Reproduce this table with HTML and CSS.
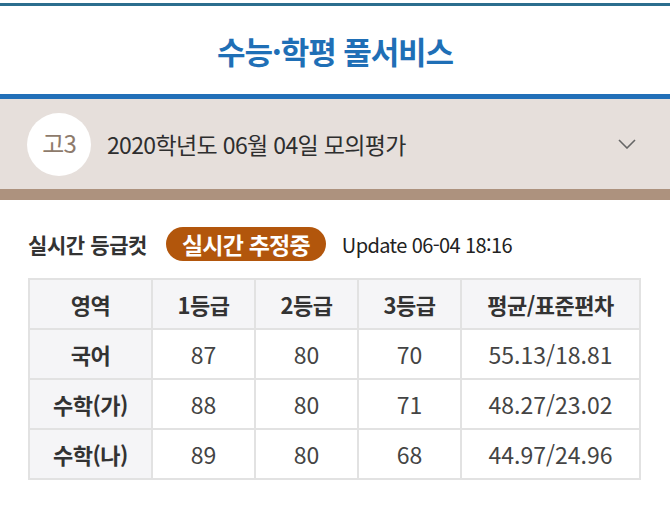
FILE: index.html
```html
<!DOCTYPE html>
<html lang="ko">
<head>
<meta charset="utf-8">
<link rel="stylesheet" href="styles.css">
</head>
<body>
<div class="page">
  <header class="top">
    <h1 class="title">수능·학평 풀서비스</h1>
  </header>
  <section class="exam">
    <div class="grade">고3</div>
    <div class="exam-name">2020학년도 06월 04일 모의평가</div>
    <svg class="chev" width="18" height="10" viewBox="0 0 18 10"><path d="M1 1 L9 9 L17 1" fill="none" stroke="#666" stroke-width="1.6"/></svg>
  </section>
  <section class="cut">
    <div class="cut-head">
      <span class="cut-title">실시간 등급컷</span>
      <span class="badge">실시간 추정중</span>
      <span class="update">Update 06-04 18:16</span>
    </div>
    <table class="grid">
      <colgroup><col class="c1"><col class="c2"><col class="c2"><col class="c2"><col class="c5"></colgroup>
      <thead>
        <tr><th>영역</th><th>1등급</th><th>2등급</th><th>3등급</th><th>평균/표준편차</th></tr>
      </thead>
      <tbody>
        <tr><th>국어</th><td>87</td><td>80</td><td>70</td><td>55.13/18.81</td></tr>
        <tr><th>수학(가)</th><td>88</td><td>80</td><td>71</td><td>48.27/23.02</td></tr>
        <tr><th>수학(나)</th><td>89</td><td>80</td><td>68</td><td>44.97/24.96</td></tr>
      </tbody>
    </table>
  </section>
</div>
</body>
</html>
```
FILE: styles.css
```css
* { box-sizing: border-box; }
html, body { margin: 0; padding: 0; background: #fff; }
body { font-family: "Noto Sans CJK KR", "Noto Sans", sans-serif; color: #333; }
.page { width: 670px; }
.top {
  border-top: 3px solid #2b6e8e;
  margin-top: 3px;
  height: 96px;
  border-bottom: 5px solid #2270b8;
  display: flex;
  align-items: center;
  justify-content: center;
}
.title {
  margin: 0;
  font-size: 31px;
  font-weight: 700;
  color: #1f6fb6;
  letter-spacing: -1.1px;
  padding-bottom: 0;
}
.exam {
  height: 101px;
  background: #e6dfdb;
  border-bottom: 11px solid #ad927e;
  display: flex;
  align-items: center;
  padding: 0 34px 0 27px;
}
.grade {
  width: 64px;
  height: 63px;
  border-radius: 50%;
  background: #fff;
  color: #8e7b6c;
  font-size: 24px;
  display: flex;
  align-items: center;
  justify-content: center;
  letter-spacing: -1px;
  padding-bottom: 3px;
}
.exam-name {
  margin-left: 16px;
  font-size: 23px;
  color: #2e2e2e;
  letter-spacing: -0.65px;
  flex: 1;
}
.chev { display: block; }
.cut { padding: 24px 31px 0 28px; }
.cut-head { display: flex; align-items: center; height: 40px; }
.cut-title { font-size: 21px; font-weight: 700; color: #333; letter-spacing: -0.4px; }
.badge {
  margin-left: 19px;
  background: #b2560c;
  color: #fff;
  font-size: 23px;
  font-weight: 700;
  border-radius: 17px;
  height: 34px;
  padding: 0 16px;
  display: flex;
  align-items: center;
  letter-spacing: -0.8px;
}
.update { margin-left: 16px; font-size: 20px; color: #222; letter-spacing: -0.6px; }
.grid {
  margin-top: 14px;
  width: 611px;
  border-collapse: collapse;
  table-layout: fixed;
  border: 2px solid #e0e0e0;
}
.c1 { width: 123px; }
.c2 { width: 103px; }
.c5 { width: 179px; }
.grid th, .grid td {
  border: 2px solid #e2e2e2;
  height: 50px;
  text-align: center;
  font-size: 22px;
  padding: 0;
}
.grid th { background: #f5f5f7; font-weight: 700; color: #333; letter-spacing: -0.5px; }
.grid td { color: #444; font-weight: 400; font-size: 23px; }
.grid tbody th { background: #f5f5f7; }
```
